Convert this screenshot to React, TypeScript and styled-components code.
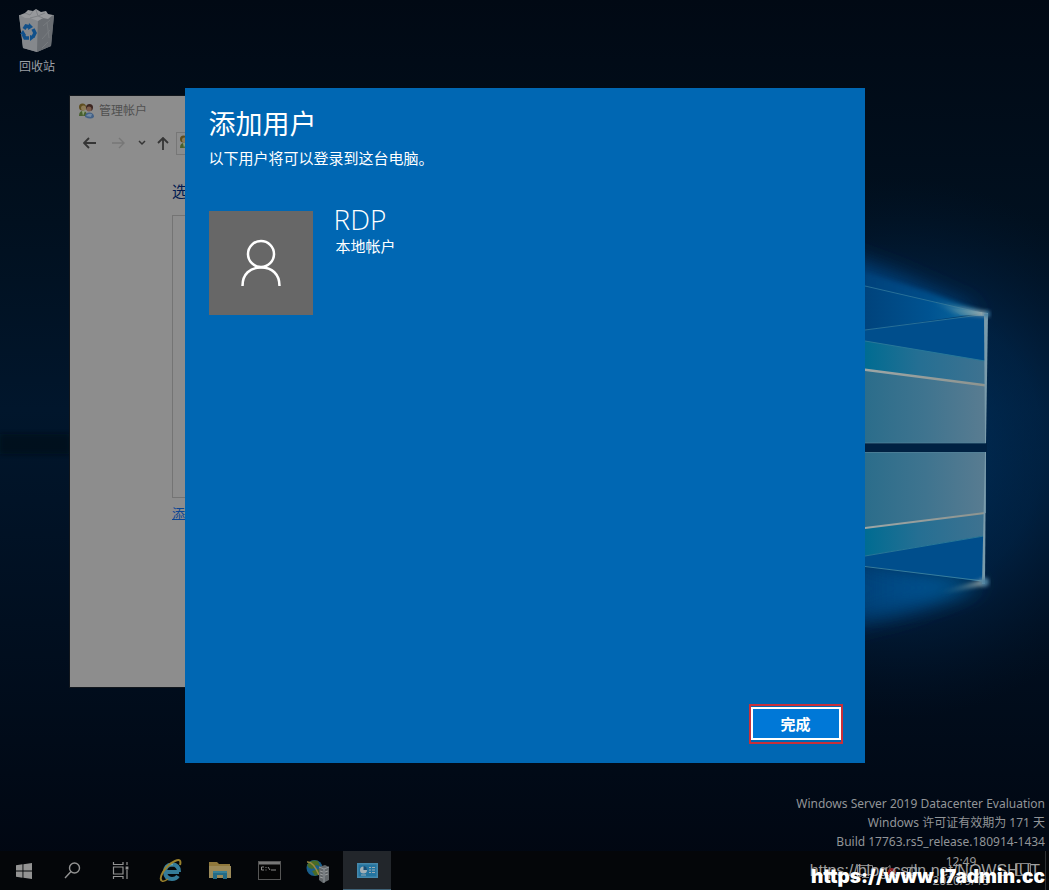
import React from 'react';
import styled, { createGlobalStyle } from 'styled-components';

const GlobalStyle = createGlobalStyle`
  *, *::before, *::after { box-sizing: border-box; }
  body {
    margin: 0;
    background: #010b19;
    font-family: "Noto Sans", "Noto Sans CJK SC", sans-serif;
  }
  h1, h2, p { margin: 0; font-weight: 400; }
  button { font-family: inherit; }
`;

const Screen = styled.div`
  position: relative;
  display: flex;
  flex-direction: column;
  min-height: 100vh;
  overflow: hidden;
`;

const WallpaperSvg = styled.svg`
  position: absolute;
  inset: 0;
  width: 100%;
  height: 100%;
`;

const Desktop = styled.main`
  position: relative;
  flex: 1;
  display: flex;
  align-items: center;
  justify-content: center;
`;

const DesktopIcon = styled.a`
  position: absolute;
  left: 0;
  top: 8px;
  width: 74px;
  display: flex;
  flex-direction: column;
  align-items: center;
  gap: 4px;
  color: #9a9fa5;
  font-size: 12px;
  line-height: 18px;
  text-decoration: none;
`;

const AccountsWindow = styled.section`
  position: absolute;
  left: 70px;
  top: 96px;
  width: 640px;
  height: 591px;
  display: flex;
  flex-direction: column;
  background: #8d8d8d;
  box-shadow: 0 0 0 1px #12171d;
`;

const WindowTitle = styled.header`
  display: flex;
  align-items: center;
  gap: 4px;
  height: 30px;
  padding: 0 8px;
  color: #505050;
  font-size: 12px;
  line-height: 18px;
`;

const NavBar = styled.nav`
  display: flex;
  align-items: center;
  height: 34px;
  padding-left: 5px;
`;

const NavButton = styled.button<{ $width: number }>`
  display: grid;
  place-items: center;
  width: ${(p) => p.$width}px;
  height: 24px;
  padding: 0;
  border: 0;
  background: none;
`;

const AddressBox = styled.div`
  flex: 1;
  display: flex;
  align-items: center;
  height: 23px;
  margin-right: 12px;
  padding-left: 2px;
  border: 1px solid #777;
`;

const WindowBody = styled.div`
  display: flex;
  flex-direction: column;
  align-items: flex-start;
  padding: 20px 102px;
`;

const Instruction = styled.h2`
  color: #00194f;
  font-size: 15px;
  line-height: 22px;
`;

const AccountList = styled.div`
  align-self: stretch;
  height: 283px;
  margin: 13px 0 3px;
  border: 1px solid #747474;
`;

const AddLink = styled.a`
  color: #0a4594;
  font-size: 13px;
  line-height: 24px;
`;

const Dialog = styled.section`
  position: relative;
  display: flex;
  flex-direction: column;
  width: 680px;
  max-width: 100%;
  min-height: 675px;
  padding: 16px 22px 19px 24px;
  background: #0067b3;
  color: #fff;
`;

const DialogTitle = styled.h1`
  font-size: 27px;
  line-height: 40px;
`;

const DialogText = styled.p`
  font-size: 15px;
  line-height: 28px;
`;

const UserRow = styled.div`
  display: flex;
  align-items: flex-start;
  gap: 21px;
  margin-top: 39px;
`;

const Avatar = styled.div`
  display: grid;
  place-items: center;
  width: 104px;
  height: 104px;
  background: #676767;
`;

const UserName = styled.h2`
  font-family: "Open Sans", "Noto Sans", sans-serif;
  font-size: 28px;
  font-weight: 300;
  line-height: 16px;
`;

const UserKind = styled.p`
  padding-left: 2px;
  font-size: 15px;
  line-height: 38px;
`;

const DialogFooter = styled.footer`
  display: flex;
  justify-content: flex-end;
  margin-top: auto;
`;

const Highlight = styled.div`
  padding: 1px 0 2px;
  border: 2px solid #c8303a;
`;

const FinishButton = styled.button`
  display: block;
  width: 90px;
  height: 33px;
  padding: 0;
  border: 2px solid #fff;
  background: #0078d7;
  color: #fff;
  font-size: 15px;
  font-weight: 700;
  line-height: 24px;
`;

const Edition = styled.div`
  position: absolute;
  right: 4px;
  bottom: 0;
  color: #929598;
  font-size: 12px;
  line-height: 19px;
  text-align: right;
`;

const Taskbar = styled.footer`
  position: relative;
  display: flex;
  justify-content: space-between;
  height: 39px;
  background: #040609;
`;

const TaskGroup = styled.div`
  display: flex;
`;

const PinnedGroup = styled.div`
  display: flex;
  gap: 1px;
  padding-left: 3px;
`;

const TaskButton = styled.button<{ $active?: boolean }>`
  display: grid;
  place-items: center;
  width: 48px;
  height: 39px;
  padding: 0;
  border: 0;
  border-bottom: ${(p) => (p.$active ? '1px solid #3f6277' : '0')};
  background: ${(p) => (p.$active ? '#22262b' : 'none')};
`;

const Tray = styled.div`
  display: flex;
  align-items: center;
  padding-right: 3px;
  border-right: 1px solid #2d3034;
  margin-right: 3px;
`;

const TrayIcons = styled.div`
  display: flex;
  align-items: center;
`;

const Clock = styled.time`
  width: 86px;
  color: #999;
  font-size: 12px;
  line-height: 19px;
  text-align: center;
`;

const NoticeButton = styled.button`
  display: grid;
  place-items: center;
  width: 38px;
  height: 38px;
  padding: 0;
  border: 0;
  background: none;
`;

const BlogMark = styled.div`
  position: absolute;
  right: 9px;
  bottom: 9px;
  color: #a0a0a0;
  font-family: "Liberation Sans", Arial, sans-serif;
  font-size: 16px;
  line-height: 20px;
  white-space: nowrap;
`;

const SiteMark = styled.div`
  position: absolute;
  right: 4px;
  bottom: 2px;
  color: #fff;
  font-family: Inter, "Liberation Sans", sans-serif;
  font-size: 19px;
  font-weight: 900;
  line-height: 22px;
  white-space: nowrap;
`;

function Wallpaper() {
  return (
    <WallpaperSvg viewBox="0 0 1049 890" preserveAspectRatio="xMidYMid slice" aria-hidden="true">
      <defs>
        <linearGradient id="sky" x1="0" y1="0" x2="0" y2="1">
          <stop offset="0" stopColor="#010914" />
          <stop offset="0.25" stopColor="#01101f" />
          <stop offset="0.46" stopColor="#01162c" />
          <stop offset="0.7" stopColor="#010f20" />
          <stop offset="1" stopColor="#010610" />
        </linearGradient>
        <radialGradient id="halo">
          <stop offset="0" stopColor="#003565" stopOpacity="0.9" />
          <stop offset="0.55" stopColor="#002b55" stopOpacity="0.55" />
          <stop offset="1" stopColor="#001a36" stopOpacity="0" />
        </radialGradient>
        <linearGradient id="beam" x1="0" y1="0" x2="1" y2="0">
          <stop offset="0" stopColor="#00437c" />
          <stop offset="0.55" stopColor="#005391" />
          <stop offset="1" stopColor="#0c6ba0" />
        </linearGradient>
        <linearGradient id="pane" x1="0" y1="0" x2="1" y2="0">
          <stop offset="0" stopColor="#2b6d8b" />
          <stop offset="0.5" stopColor="#3f748f" />
          <stop offset="1" stopColor="#597c91" />
        </linearGradient>
        <linearGradient id="teal" x1="0" y1="0" x2="1" y2="0">
          <stop offset="0" stopColor="#006c92" />
          <stop offset="0.45" stopColor="#256f93" />
          <stop offset="1" stopColor="#3e7290" />
        </linearGradient>
        <linearGradient id="cream" x1="0" y1="0" x2="1" y2="0">
          <stop offset="0" stopColor="#9da6a6" />
          <stop offset="1" stopColor="#8e948f" />
        </linearGradient>
        <linearGradient id="flare" x1="0" y1="0" x2="1" y2="0">
          <stop offset="0" stopColor="#3c87a0" stopOpacity="0" />
          <stop offset="1" stopColor="#a4afb0" />
        </linearGradient>
        <filter id="soft" x="-40%" y="-60%" width="180%" height="220%">
          <feGaussianBlur stdDeviation="11" />
        </filter>
        <filter id="fine" x="-20%" y="-40%" width="140%" height="180%">
          <feGaussianBlur stdDeviation="2" />
        </filter>
      </defs>
      <rect width="1049" height="890" fill="url(#sky)" />
      <rect y="434" width="70" height="20" fill="#010a17" filter="url(#fine)" opacity="0.6" />
      <ellipse cx="900" cy="448" rx="260" ry="270" fill="url(#halo)" />
      <path d="M830 250 L900 276 L980 312 L865 345 L830 340Z" fill="#00427e" filter="url(#soft)" />
      <path d="M830 630 L905 612 L978 584 L865 560 L830 560Z" fill="#003f76" filter="url(#soft)" />
      <path d="M865 273 L925 291 L985 313 L865 330Z" fill="url(#beam)" filter="url(#fine)" opacity="0.75" />
      <path d="M865 286 L982 313 L865 330Z" fill="url(#beam)" />
      <path d="M865 566 L983 583 L930 600 L865 612Z" fill="url(#beam)" filter="url(#soft)" />
      <path d="M865 330 L986 314 V443 H865Z" fill="#004e8c" />
      <path d="M865 341 L985 361 V385 L865 369Z" fill="url(#teal)" />
      <path d="M865 369 L985 385 V443 H865Z" fill="url(#pane)" />
      <path d="M865 452 H986 V513 L865 528Z" fill="url(#pane)" />
      <path d="M865 528 L984 513 V536 L865 556Z" fill="url(#teal)" />
      <path d="M865 556 L984 536 V582 L865 566Z" fill="#004e8c" />
      <rect x="865" y="443" width="122" height="9" fill="#002142" />
      <path d="M865 368.5 L985 384 V386.5 L865 371Z" fill="url(#cream)" />
      <path d="M865 527 L985 512 V514 L865 529Z" fill="url(#cream)" />
      <g fill="none" strokeWidth="1">
        <path d="M865 286 L982 313 M865 330 L980 315" stroke="#276f97" />
        <path d="M865 341 L985 361 M865 556 L984 536" stroke="#287899" />
        <path d="M865 566.500 L983 581" stroke="#377d9d" />
        <path d="M865 443 H986 M865 452.500 H986" stroke="#54839a" opacity="0.7" />
      </g>
      <path d="M930 300 L987 312 V316 L955 314Z" fill="url(#flare)" filter="url(#fine)" />
      <path d="M935 594 L985 579 V585Z" fill="url(#flare)" filter="url(#fine)" />
      <path d="M950 308 L988 313 V316 L960 315Z" fill="url(#flare)" />
      <path d="M984 314 H988 L986 443 H985Z" fill="#7a9bab" />
      <path d="M985 452 H986 L985 584 H982Z" fill="#7a9bab" />
      <circle cx="987" cy="314" r="3" fill="#31759e" filter="url(#fine)" />
      <circle cx="985" cy="582" r="4" fill="#477e9e" filter="url(#fine)" />
    </WallpaperSvg>
  );
}

function RecycleBinIcon() {
  return (
    <svg width="40" height="46" viewBox="0 0 40 46" aria-hidden="true">
      <path d="M2 7 L37 7 L34 38 L20 44 L6 40Z" fill="#7b7f84" />
      <path d="M2 7 L21 12 L20 44 L6 40Z" fill="#85888c" />
      <path d="M21 12 L37 7 L34 38 L20 44Z" fill="#696d72" />
      <path d="M3 7 L8 5 L11 2 L16 3 L19 1 L24 4 L29 3 L31 6 L36 7 L31 11 L26 10 L21 13 L13 10 L8 10Z" fill="#97999c" />
      <path d="M8 5 L13 7 L16 3 M19 2 L21 8 L28 5 M13 10 L21 8 L26 10" stroke="#7e8185" fill="none" />
      <path d="M26 18 L33 12 M25 31 L33 22 M25 40 L31 34 M30 14 L32 30" stroke="#777b7f" fill="none" />
      <g fill="none" stroke="#11508a" strokeWidth="3.500">
        <path d="M7 21 L9 18 L13 19" />
        <path d="M16 21 L18 25 L16 29" />
        <path d="M12 30 L8 30 L6 26" />
      </g>
      <path d="M12 15 L16 19 L11 22Z M18 29 L13 33 L13 27Z M3 26 L6 22 L9 27Z" fill="#11508a" />
    </svg>
  );
}

function UsersIcon() {
  return (
    <svg width="17" height="17" viewBox="0 0 17 17" aria-hidden="true">
      <circle cx="4.500" cy="4" r="3.500" fill="#5f4e20" />
      <circle cx="5.500" cy="5" r="2.500" fill="#8d7b56" />
      <path d="M1 13 Q1 8 5 8 Q9 8 9 13Z" fill="#48602f" />
      <path d="M4 8 L5 13 L7 8Z" fill="#8c9b79" />
      <circle cx="11.500" cy="4.500" r="3.500" fill="#3c2520" />
      <circle cx="11" cy="6" r="2.500" fill="#7c5b4b" />
      <path d="M7 14 Q7 9 12 9.500 Q16 10 16 14 Q13 17 7 14Z" fill="#426087" />
      <path d="M8 13 Q10 10 14 11 L13 14Z" fill="#7088a2" />
    </svg>
  );
}

function WindowsIcon() {
  return (
    <svg width="16" height="16" viewBox="0 0 16 16" fill="#939393" aria-hidden="true">
      <path d="M0 2.200 L6.500 1.300 V7.500 H0Z M7.400 1.200 L16 0 V7.500 H7.400Z M0 8.400 H6.500 V14.700 L0 13.800Z M7.400 8.400 H16 V16 L7.400 14.800Z" />
    </svg>
  );
}

function SearchIcon() {
  return (
    <svg width="17" height="17" viewBox="0 0 17 17" fill="none" stroke="#939393" strokeWidth="1.400" aria-hidden="true">
      <circle cx="10.500" cy="6" r="5" />
      <path d="M7 9.500 L1 16" />
    </svg>
  );
}

function TaskViewIcon() {
  return (
    <svg width="17" height="17" viewBox="0 0 17 17" fill="none" stroke="#939393" strokeWidth="1.200" aria-hidden="true">
      <path d="M1.500 0 V2.500 H11 V0 M1.500 5 H11 V12 H1.500Z M1.500 17 V14.500 H11 V17 M15 0 V3 M15 8 V17" />
      <rect x="13.600" y="4.500" width="2.800" height="3" fill="#939393" stroke="none" />
    </svg>
  );
}

function ExplorerIcon() {
  return (
    <svg width="24" height="24" viewBox="0 0 24 24" fill="none" aria-hidden="true">
      <path d="M20 13 H7 M20 13 Q20 5.500 13 5.500 Q6 6 6 13 Q6.500 20 13 20 Q17 20 19 17" stroke="#347b98" strokeWidth="4" />
      <path d="M7 8 Q10 5 14 5.500" stroke="#69a5b8" strokeWidth="1.500" />
      <path d="M3 22 Q0 20 4 13 Q9 5 16 2 Q23 -1 21 6" stroke="#9a812c" strokeWidth="2" />
      <path d="M3 22 Q5 23 9 20" stroke="#9a812c" strokeWidth="1.500" />
    </svg>
  );
}

function FolderIcon() {
  return (
    <svg width="22" height="19" viewBox="0 0 22 19" aria-hidden="true">
      <path d="M0 1 H8 L10 3 H21 V17 H0Z" fill="#8f783c" />
      <path d="M0 5 H22 V17 H0Z" fill="#9c8a59" />
      <path d="M4 10 H18 V18 H14 V14 H8 V18 H4Z" fill="#246b86" />
      <path d="M4 10 H18 V12 H4Z" fill="#398097" />
    </svg>
  );
}

function TerminalIcon() {
  return (
    <svg width="23" height="19" viewBox="0 0 23 19" fill="none" aria-hidden="true">
      <rect x="0.500" y="0.500" width="22" height="18" fill="#050505" stroke="#555" />
      <rect x="1" y="1" width="21" height="2.500" fill="#777" />
      <path d="M6 6 H3.500 V9 H6 M8 6 V7 M8 8.500 V9.500 M10 6 L12 9 M13 9 H18" stroke="#898989" />
    </svg>
  );
}

function ServerIcon() {
  return (
    <svg width="24" height="24" viewBox="0 0 24 24" aria-hidden="true">
      <circle cx="8.500" cy="9" r="8" fill="#195e8b" />
      <path d="M1 6 Q5 0 12 2 L14 7 L10 6 L7 10 L3 9Z M6 12 L13 10 L15 14 L9 17Z" fill="#496c27" />
      <path d="M1 3 Q7 2 13 16" fill="none" stroke="#9b8942" strokeWidth="1.500" />
      <path d="M13 8 L19 6 L23 8 V21 L17 24 L13 21Z" fill="#62676a" />
      <path d="M13 8 L18 10 L23 8 M18 10 V24" fill="none" stroke="#90979b" />
      <path d="M14 12 L17 13 M14 15 L17 16 M14 18 L17 19 M19 13 L22 12 M19 16 L22 15" stroke="#9a9d9e" />
    </svg>
  );
}

function ControlPanelIcon() {
  return (
    <svg width="21" height="15" viewBox="0 0 21 15" fill="none" aria-hidden="true">
      <rect width="21" height="15" fill="#4688ab" />
      <rect x="1.500" y="1.500" width="18" height="12" fill="#2474a0" />
      <circle cx="6.500" cy="7" r="3.500" fill="#a3afb5" />
      <path d="M6.500 3 V7 H10 A3.500 3.500 0 0 0 6.500 3Z" fill="#164d76" />
      <path d="M12 4.500 H14 M12 7 H14 M12 9.500 H14 M15 4.500 H18 M15 7 H18 M15 9.500 H18 M4 12 H9" stroke="#9dabb2" />
    </svg>
  );
}

export default function App() {
  return (
    <>
      <GlobalStyle />
      <Screen>
        <Wallpaper />
        <Desktop>
          <DesktopIcon href="#recycle">
            <RecycleBinIcon />
            回收站
          </DesktopIcon>

          <AccountsWindow>
            <WindowTitle>
              <UsersIcon />
              管理帐户
            </WindowTitle>
            <NavBar>
              <NavButton $width={28} aria-label="Back">
                <svg width="13" height="12" viewBox="0 0 13 12" fill="none" stroke="#353535" strokeWidth="1.800">
                  <path d="M6 1 L1 6 L6 11 M1 6 H13" />
                </svg>
              </NavButton>
              <NavButton $width={31} aria-label="Forward">
                <svg width="13" height="12" viewBox="0 0 13 12" fill="none" stroke="#777" strokeWidth="1.400">
                  <path d="M7 1 L12 6 L7 11 M12 6 H0" />
                </svg>
              </NavButton>
              <NavButton $width={16} aria-label="Recent">
                <svg width="8" height="6" viewBox="0 0 8 6" fill="none" stroke="#353535" strokeWidth="1.500">
                  <path d="M1 1 L4 4 L7 1" />
                </svg>
              </NavButton>
              <NavButton $width={26} aria-label="Up">
                <svg width="12" height="13" viewBox="0 0 12 13" fill="none" stroke="#353535" strokeWidth="1.800">
                  <path d="M1 6 L6 1 L11 6 M6 1 V13" />
                </svg>
              </NavButton>
              <AddressBox>
                <UsersIcon />
              </AddressBox>
            </NavBar>
            <WindowBody>
              <Instruction>选</Instruction>
              <AccountList />
              <AddLink href="#add">添</AddLink>
            </WindowBody>
          </AccountsWindow>

          <Dialog role="dialog" aria-labelledby="dialog-title">
            <DialogTitle id="dialog-title">添加用户</DialogTitle>
            <DialogText>以下用户将可以登录到这台电脑。</DialogText>
            <UserRow>
              <Avatar>
                <svg width="42" height="48" viewBox="0 0 42 48" fill="none" stroke="#fff" strokeWidth="2.500" aria-hidden="true">
                  <circle cx="21" cy="15" r="13" />
                  <path d="M2.500 47 C2.500 35 10 28.500 21 28.500 C32 28.500 39.500 35 39.500 47" />
                </svg>
              </Avatar>
              <div>
                <UserName>RDP</UserName>
                <UserKind>本地帐户</UserKind>
              </div>
            </UserRow>
            <DialogFooter>
              <Highlight>
                <FinishButton type="button">完成</FinishButton>
              </Highlight>
            </DialogFooter>
          </Dialog>

          <Edition>
            <p>Windows Server 2019 Datacenter Evaluation</p>
            <p>Windows 许可证有效期为 171 天</p>
            <p>Build 17763.rs5_release.180914-1434</p>
          </Edition>
        </Desktop>

        <Taskbar>
          <TaskGroup>
            <TaskButton aria-label="Start"><WindowsIcon /></TaskButton>
            <TaskButton aria-label="Search"><SearchIcon /></TaskButton>
            <TaskButton aria-label="Task view"><TaskViewIcon /></TaskButton>
            <PinnedGroup>
              <TaskButton aria-label="Internet Explorer"><ExplorerIcon /></TaskButton>
              <TaskButton aria-label="File Explorer"><FolderIcon /></TaskButton>
              <TaskButton aria-label="Command prompt"><TerminalIcon /></TaskButton>
              <TaskButton aria-label="Server manager"><ServerIcon /></TaskButton>
              <TaskButton $active aria-label="Control panel"><ControlPanelIcon /></TaskButton>
            </PinnedGroup>
          </TaskGroup>
          <Tray>
            <TrayIcons>
              <svg width="62" height="20" viewBox="0 0 62 20" fill="none" stroke="#858585" aria-hidden="true">
                <path d="M1.500 4.500 H16.500 V13.500 H4.500 M1.500 4.500 V15.500 H5.500 M9.500 13.500 V16.500 M6 16.500 H13" />
                <path d="M27.500 8 H30 L34 4.500 V16 L30 12.500 H27.500Z" />
                <circle cx="36" cy="11" r="4" fill="#8d2020" stroke="none" />
                <path d="M34.500 9.500 L37.500 12.500 M37.500 9.500 L34.500 12.500" stroke="#aaa" />
                <path d="M51.500 6.500 H60.500 V12.500 H51.500Z M56 3.500 V16.500" />
              </svg>
            </TrayIcons>
            <Clock>
              12:49
              <br />
              2020/9/15
            </Clock>
            <NoticeButton aria-label="Notifications">
              <svg width="16" height="16" viewBox="0 0 16 16" fill="none" stroke="#858585">
                <path d="M0.500 0.500 H15.500 V12.500 H11.500 V15.500 L8.500 12.500 H0.500Z" />
              </svg>
            </NoticeButton>
          </Tray>
          <BlogMark>https://blog.csdn.net/NOWSHUT</BlogMark>
          <SiteMark>https://www.l7admin.cc</SiteMark>
        </Taskbar>
      </Screen>
    </>
  );
}
